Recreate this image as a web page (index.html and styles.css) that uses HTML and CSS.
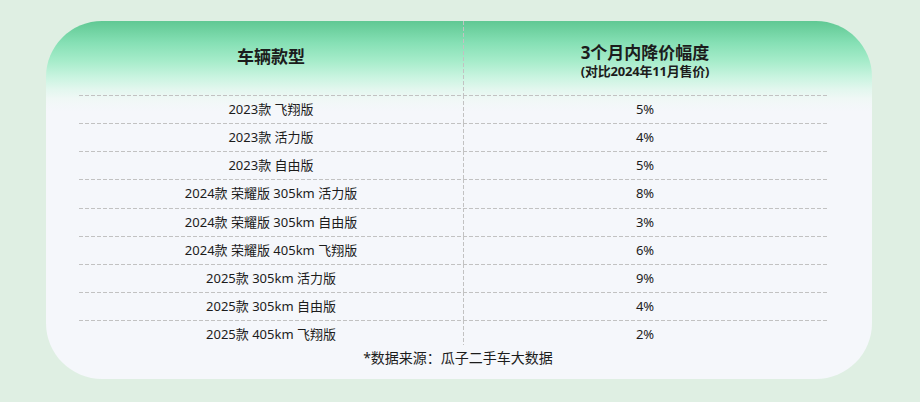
FILE: index.html
```html
<!DOCTYPE html>
<html lang="zh">
<head>
<meta charset="utf-8">
<link rel="stylesheet" href="styles.css">
</head>
<body>
<div class="card">
  <div class="table">
    <div class="th">车辆款型</div>
    <div class="th col2 th2">
      <div class="t1">3个月内降价幅度</div>
      <div class="t2">(对比2024年11月售价)</div>
    </div>
    <div class="td">2023款 飞翔版</div><div class="td col2">5%</div>
    <div class="td">2023款 活力版</div><div class="td col2">4%</div>
    <div class="td">2023款 自由版</div><div class="td col2">5%</div>
    <div class="td">2024款 荣耀版 305km 活力版</div><div class="td col2">8%</div>
    <div class="td">2024款 荣耀版 305km 自由版</div><div class="td col2">3%</div>
    <div class="td">2024款 荣耀版 405km 飞翔版</div><div class="td col2">6%</div>
    <div class="td">2025款 305km 活力版</div><div class="td col2">9%</div>
    <div class="td">2025款 305km 自由版</div><div class="td col2">4%</div>
    <div class="td last">2025款 405km 飞翔版</div><div class="td col2 last">2%</div>
  </div>
  <p class="note">*数据来源：瓜子二手车大数据</p>
</div>
</body>
</html>
```
FILE: styles.css
```css
html, body {
  margin: 0;
  padding: 0;
  background: #dfefe3;
}
body {
  width: 920px;
  height: 402px;
  overflow: hidden;
  font-family: "Noto Sans", "Noto Sans CJK SC", sans-serif;
  color: #1c1c1c;
  padding-top: 21px;
  padding-left: 46px;
  box-sizing: border-box;
}
.card {
  width: 826px;
  height: 358px;
  box-sizing: border-box;
  border-radius: 56px;
  padding: 0 45px 0 33px;
  background: linear-gradient(180deg, #60c893 0px, #86e0b5 22px, #a6ecca 40px, #c9f4e0 56px, #e2f7ee 68px, #f0f8f6 78px, #f5f7fb 90px, #f5f7fb 100%);
}
.table {
  display: grid;
  grid-template-columns: 384px 364px;
  grid-template-rows: 74px repeat(9, 28.125px);
}
.th {
  display: flex;
  flex-direction: column;
  align-items: center;
  justify-content: center;
  font-weight: 700;
  font-size: 17px;
  line-height: 20px;
  padding-bottom: 2px;
  box-sizing: border-box;
}
.th2 {
  padding-bottom: 0;
  padding-top: 6px;
}
.th .t1 {
  font-size: 17px;
  line-height: 20px;
}
.th .t2 {
  font-size: 13px;
  line-height: 16px;
  letter-spacing: -0.2px;
}
.td {
  display: flex;
  align-items: center;
  justify-content: center;
  font-size: 13px;
  line-height: 16px;
  background-image: repeating-linear-gradient(90deg, #c2c2c2 0 4px, transparent 4px 6px);
  background-size: 100% 1px;
  background-position: left top;
  background-repeat: no-repeat;
}
.col2 {
  background-image: repeating-linear-gradient(180deg, #c2c2c2 0 4px, transparent 4px 6px);
  background-size: 1px 100%;
  background-position: left top;
  background-repeat: no-repeat;
}
.td.col2 {
  background-image:
    repeating-linear-gradient(90deg, #c2c2c2 0 4px, transparent 4px 6px),
    repeating-linear-gradient(180deg, #c2c2c2 0 4px, transparent 4px 6px);
  background-size: 100% 1px, 1px 100%;
  background-position: left top, left top;
  background-repeat: no-repeat, no-repeat;
}
.td.col2.last {
  background-size: 100% 1px, 1px 25px;
}
.note {
  margin: 0;
  text-align: center;
  font-size: 14px;
  line-height: 20px;
  padding-left: 10px;
}
```
